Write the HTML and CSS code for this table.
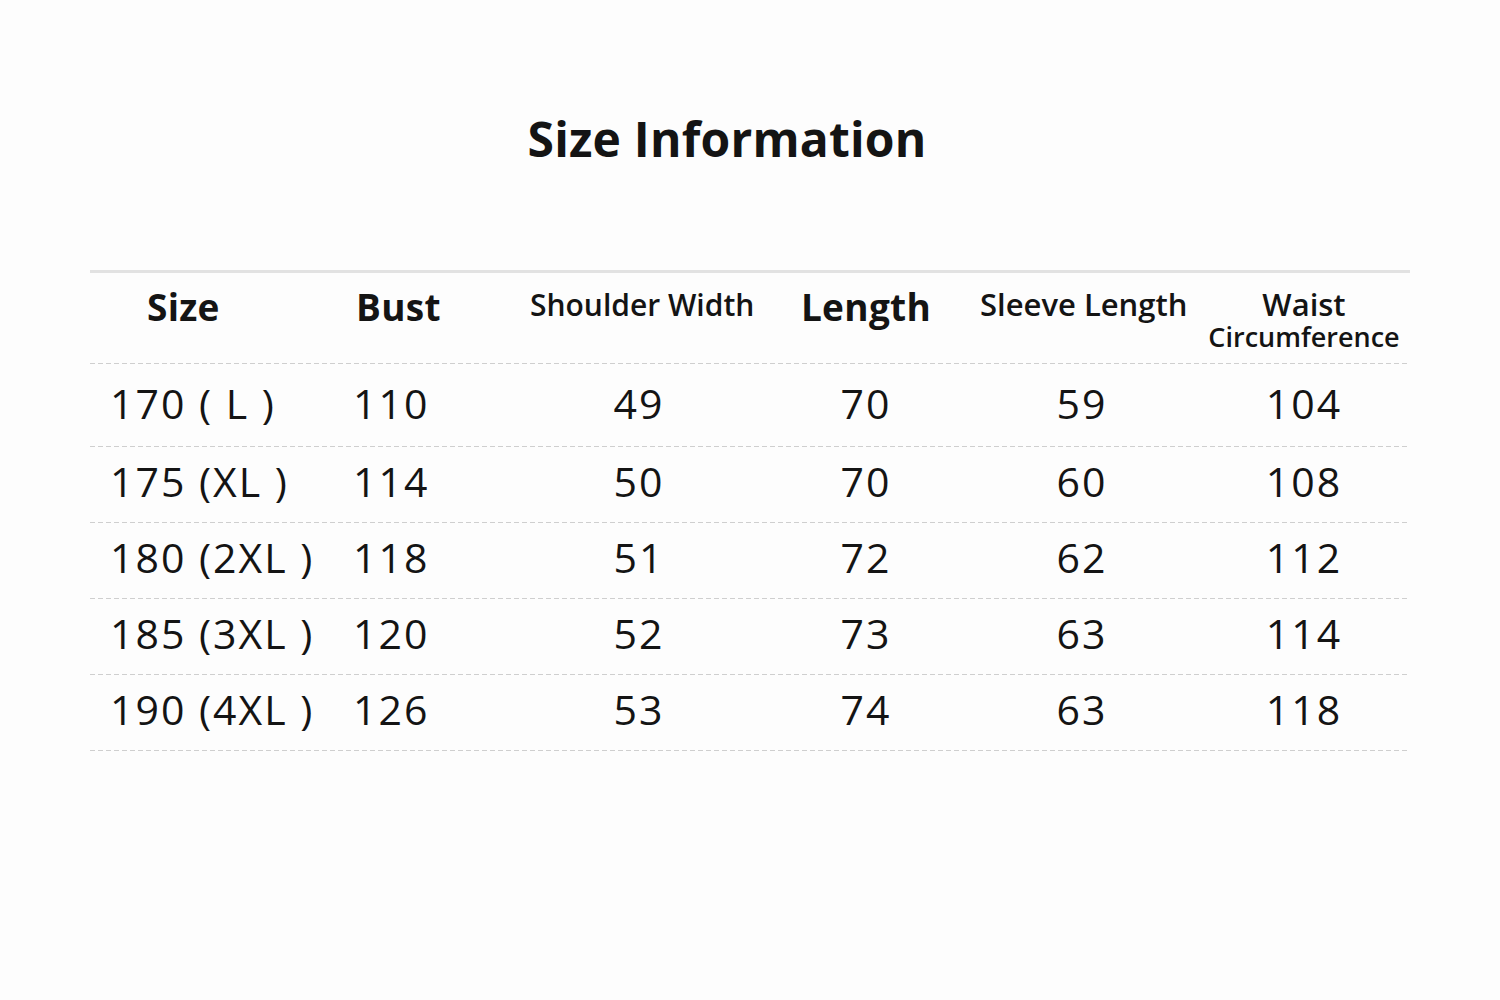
FILE: index.html
```html
<!DOCTYPE html>
<html lang="en">
<head>
<meta charset="utf-8">
<title>Size Information</title>
<link rel="stylesheet" href="styles.css">
</head>
<body>
<main class="page">
  <h1 class="title">Size Information</h1>
  <div class="table">
    <div class="row head">
      <div class="cell c1"><span class="h-big">Size</span></div>
      <div class="cell c2"><span class="h-big">Bust</span></div>
      <div class="cell c3"><span class="h-mid">Shoulder Width</span></div>
      <div class="cell c4"><span class="h-big">Length</span></div>
      <div class="cell c5"><span class="h-alt">Sleeve Length</span></div>
      <div class="cell c6"><span class="h-alt">Waist</span><span class="h-sub">Circumference</span></div>
    </div>
    <div class="row first">
      <div class="cell c1">170 (&nbsp;L )</div>
      <div class="cell c2">110</div>
      <div class="cell c3">49</div>
      <div class="cell c4">70</div>
      <div class="cell c5">59</div>
      <div class="cell c6">104</div>
    </div>
    <div class="row">
      <div class="cell c1">175 (XL )</div>
      <div class="cell c2">114</div>
      <div class="cell c3">50</div>
      <div class="cell c4">70</div>
      <div class="cell c5">60</div>
      <div class="cell c6">108</div>
    </div>
    <div class="row">
      <div class="cell c1">180 (2XL )</div>
      <div class="cell c2">118</div>
      <div class="cell c3">51</div>
      <div class="cell c4">72</div>
      <div class="cell c5">62</div>
      <div class="cell c6">112</div>
    </div>
    <div class="row">
      <div class="cell c1">185 (3XL )</div>
      <div class="cell c2">120</div>
      <div class="cell c3">52</div>
      <div class="cell c4">73</div>
      <div class="cell c5">63</div>
      <div class="cell c6">114</div>
    </div>
    <div class="row">
      <div class="cell c1">190 (4XL )</div>
      <div class="cell c2">126</div>
      <div class="cell c3">53</div>
      <div class="cell c4">74</div>
      <div class="cell c5">63</div>
      <div class="cell c6">118</div>
    </div>
  </div>
</main>
</body>
</html>
```

FILE: styles.css
```css
html, body {
  margin: 0;
  padding: 0;
  background: #fdfdfd;
}
body {
  font-family: "Open Sans", "Noto Sans CJK SC", sans-serif;
  color: #141414;
}
.page {
  width: 1320px;
  padding: 108px 90px 0;
}
.title {
  margin: 0 0 100px;
  padding-right: 46px;
  text-align: center;
  font-size: 48px;
  font-weight: 700;
  line-height: 62px;
  letter-spacing: 0.2px;
}
.table {
  border-top: 3px solid #e2e2e2;
}
.row {
  display: grid;
  grid-template-columns: 255px 185px 222px 228px 204px 226px;
  height: 76px;
  align-items: center;
  background-image: repeating-linear-gradient(to right, #cfcfcf 0 5px, transparent 5px 8px);
  background-size: 100% 1px;
  background-position: left bottom;
  background-repeat: no-repeat;
  font-size: 41px;
  line-height: 1;
  letter-spacing: 2px;
}
.row .cell {
  padding-bottom: 7px;
}
.row.first {
  height: 83px;
}
.row.first .cell {
  padding-bottom: 4px;
}
.row.head {
  height: 91px;
  align-items: start;
  letter-spacing: 0;
}
.cell {
  text-align: center;
  white-space: nowrap;
}
.c1 { text-align: left; padding-left: 20px; }
.c2 { text-align: left; padding-left: 8px; }
.c3 { padding-right: 4px; }
.c6 { padding-left: 14px; }
.row.head .cell {
  padding-top: 14px;
  padding-bottom: 0;
}
.head .c1 { padding-left: 57px; }
.head .c2 { padding-left: 11px; }
.head .c3 { padding-right: 0; }
.h-big {
  display: block;
  font-size: 37px;
  font-weight: 700;
  line-height: 40px;
  letter-spacing: 0.3px;
}
.h-mid {
  display: block;
  font-size: 30px;
  font-weight: 600;
  line-height: 34px;
  padding-top: 1px;
}
.h-alt {
  display: block;
  font-size: 31px;
  font-weight: 600;
  line-height: 33px;
  padding-top: 1px;
}
.h-sub {
  display: block;
  font-size: 27px;
  font-weight: 600;
  line-height: 31px;
}
```
